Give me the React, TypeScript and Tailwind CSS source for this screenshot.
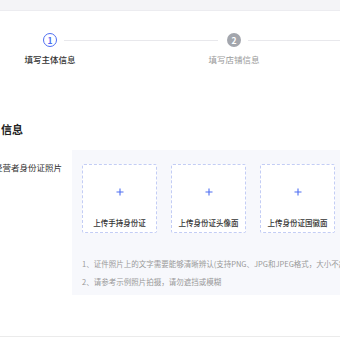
import React from 'react';

const font = { fontFamily: '"PingFang SC", "Noto Sans CJK SC", "Noto Sans", sans-serif' };

const uploads = ['上传手持身份证', '上传身份证头像面', '上传身份证国徽面'];

const UploadBox = ({ label }: { label: string }) => (
  <div className="w-[75px] h-[69px] shrink-0 bg-white border border-dashed border-[#c3cdf5] rounded-[2px] flex flex-col items-center">
    <svg className="mt-[23px]" width="8" height="8" viewBox="0 0 8 8">
      <path d="M4 0.5V7.5M0.5 4H7.5" stroke="#4e6ef2" strokeWidth="1.1" />
    </svg>
    <div className="mt-[22px] text-[7.5px] leading-[10px] text-[#333] font-medium whitespace-nowrap">{label}</div>
  </div>
);

export default function App() {
  return (
    <div className="w-[340px] h-[340px] overflow-hidden bg-white relative" style={font}>
      <div className="h-[11px] bg-[#f4f4f7] border-b border-[#ececf0]" />

      {/* steps */}
      <div className="mt-[22px] flex items-center">
        <div className="ml-[43px] w-[14px] h-[14px] shrink-0 rounded-full border-[1.5px] border-[#4e6ef2] flex items-center justify-center text-[#4e6ef2] text-[8.5px] font-bold leading-none">
          1
        </div>
        <div className="ml-[7px] w-[154px] h-px bg-[#e8e8ec]" />
        <div className="ml-[9px] w-[14px] h-[14px] shrink-0 rounded-full bg-[#a3a6ad] flex items-center justify-center text-white text-[8.5px] font-bold leading-none">
          2
        </div>
        <div className="ml-[7px] flex-1 h-px bg-[#e8e8ec]" />
      </div>
      <div className="mt-[6px] flex text-[8.5px] leading-[12px] whitespace-nowrap">
        <div className="w-[100px] text-center text-[#333] font-medium">填写主体信息</div>
        <div className="ml-[84px] w-[100px] text-center text-[#999]">填写店铺信息</div>
      </div>

      {/* section title */}
      <div className="mt-[57px] pl-[1px] text-[11px] leading-[14px] font-semibold text-[#222]">信息</div>

      {/* form row */}
      <div className="mt-[14px] flex">
        <div className="w-[62px] shrink-0 flex justify-end pt-[11px]">
          <span className="whitespace-nowrap text-[8.5px] leading-[12px] text-[#333]">经营者身份证照片</span>
        </div>
        <div className="ml-[10px] w-[300px] shrink-0 h-[145px] bg-[#f7f8fc] pl-[10px] pt-[14px]">
          <div className="flex gap-[14px]">
            {uploads.map((u) => (
              <UploadBox key={u} label={u} />
            ))}
          </div>
          <div className="mt-[22px] text-[7.5px] leading-[18px] text-[#999] whitespace-nowrap">
            <div>1、证件照片上的文字需要能够清晰辨认(支持PNG、JPG和JPEG格式，大小不超过5M)</div>
            <div>2、请参考示例照片拍摄，请勿遮挡或模糊</div>
          </div>
        </div>
      </div>

      <div className="absolute left-0 right-0 top-[336px] h-px bg-[#ebebeb]" />
    </div>
  );
}
